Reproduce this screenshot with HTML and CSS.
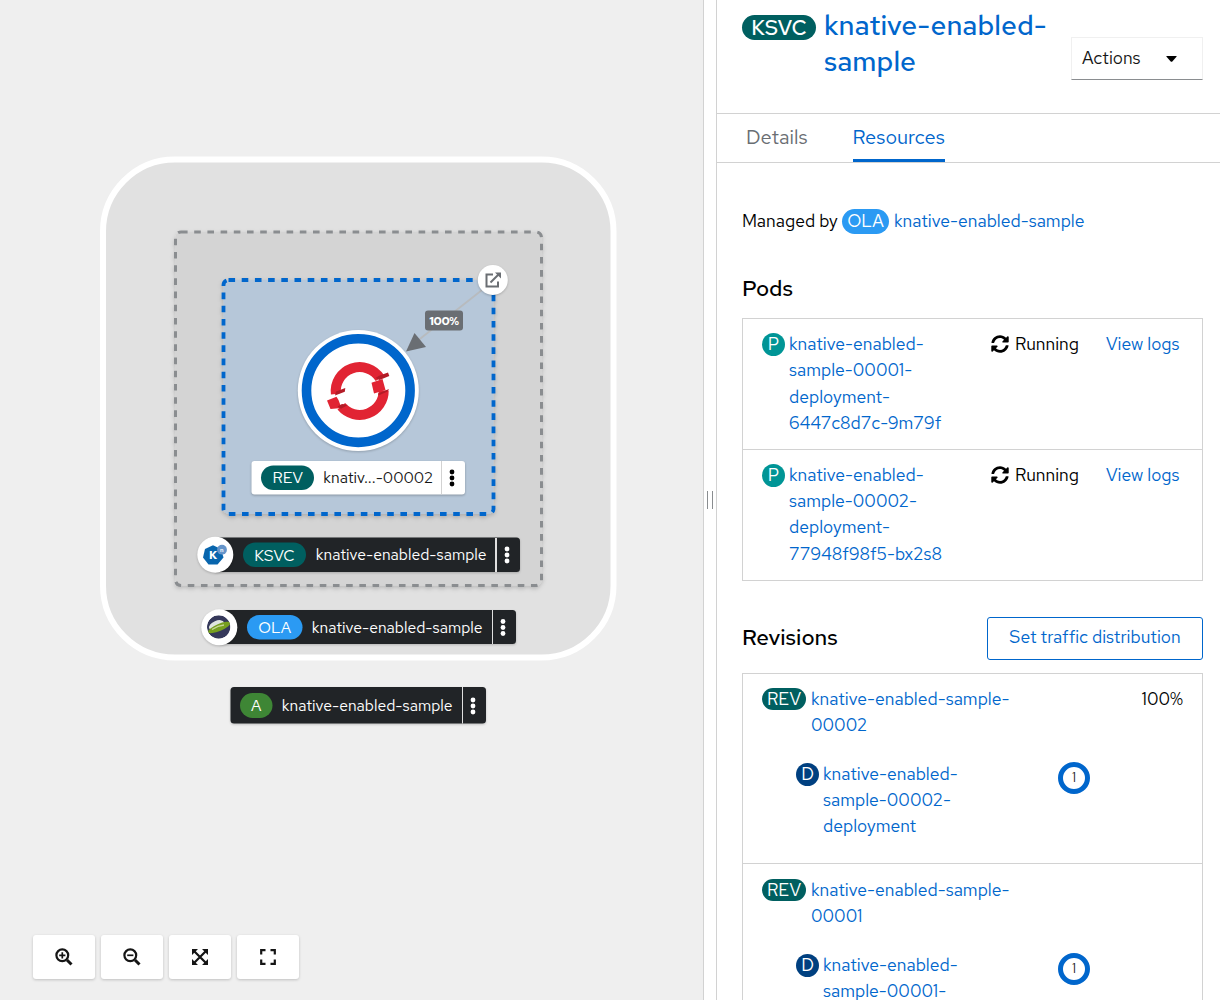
FILE: index.html
```html
<!DOCTYPE html>
<html lang="en">
<head>
<meta charset="utf-8">
<title>Topology</title>
<link rel="stylesheet" href="styles.css">
</head>
<body>
<div class="app">
<main class="topology">
<svg class="graph" width="703" height="1000" viewBox="0 0 703 1000">
  <defs>
    <filter id="shadow" x="-10%" y="-10%" width="120%" height="130%"><feDropShadow dx="0" dy="2" stdDeviation="2" flood-color="#030303" flood-opacity=".18"/></filter>
    <clipPath id="sphere"><circle cx="218.700" cy="627" r="11.700"/></clipPath>
    <g id="kebab"><circle cy="-6" r="2.400"/><circle r="2.400"/><circle cy="6" r="2.400"/></g>
  </defs>

  <rect class="application" x="103" y="159.500" width="510.500" height="498" rx="72"/>

  <g filter="url(#shadow)">
    <rect class="service" x="175.500" y="232" width="366" height="353.500" rx="5.500"/>
  </g>
  <g filter="url(#shadow)">
    <rect class="revision-area" x="223.500" y="280" width="270" height="234" rx="5"/>
  </g>

  <path class="edge" d="M482 290 416 342"/>
  <path class="arrow" d="M406 351.500 414.500 333 426 347z"/>
  <rect class="edge-tag" x="425" y="310.500" width="38" height="20" rx="3"/>
  <text class="edge-text" x="444" y="325" text-anchor="middle">100%</text>

  <circle class="disc" cx="492.800" cy="280" r="15"/>
  <g class="open-icon">
    <path d="M493 274.500h-6.500v12h11.500v-5"/>
    <path d="M490.500 282.500 499 274"/>
    <path class="open-head" d="M495 272.500h6v6z"/>
  </g>

  <circle class="disc" cx="358.300" cy="390.600" r="60.500"/>
  <circle class="pod-ring" cx="358.300" cy="390.600" r="51.800"/>
  <g class="openshift">
    <path class="logo-arc" d="M335.900 394A24 24 0 0 1 380 378.300"/>
    <path class="logo-arc" d="M383.700 390.500A24 24 0 0 1 341.300 406.300"/>
    <path class="logo-gap" d="M328 397.500 347 390.500 348.500 394.500 337 398.500 328 401zM369 384 390 375.500 390 378.500 382 381 369 385.500z"/>
    <path class="logo-main" d="M327 400.500 336.500 396.700 338.500 400 341.500 408 330.500 409zM371.500 382.700 382.500 379 385.500 390 374 393.500z"/>
    <path class="logo-dark" d="M379 375.800 388 372.600 389.300 376 379.500 380 375.500 378z M378 393.500 389 389 387.500 391.500 378.500 395.500zM336 391.500 345.300 388 344.800 391.800 335 395.500zM337.500 406.500 342 404 348 405 341 408.800z"/>
  </g>

  <rect class="node-label" x="251.500" y="461" width="213.500" height="33.500" rx="3"/>
  <path class="label-line" d="M441.500 461v33.500"/>
  <rect class="fill-teal" x="261" y="465.500" width="53" height="24.500" rx="12.250"/>
  <text class="node-text light" x="287.700" y="483.200" text-anchor="middle">REV</text>
  <text class="node-text" x="323.300" y="483.200">knativ...-00002</text>
  <use href="#kebab" x="452" y="478"/>

  <path class="dark-label" d="M215 537.500h301.500q3.500 0 3.500 3.500v27.500q0 3.500-3.500 3.500H215z"/>
  <path class="divider" d="M496 538v34"/>
  <circle class="disc" cx="215.300" cy="554.700" r="18"/>
  <path class="kn-blue" d="M213 545.300 221 549 223.500 557.500 217.500 564.500H208.500L203 557.500 205 549z"/>
  <circle class="kn-light" cx="222" cy="549.700" r="4.900"/>
  <text class="kn-k" x="209" y="559.300">K</text>
  <text class="kn-n" x="220" y="552">n</text>
  <rect class="fill-teal" x="243" y="542.500" width="63" height="24.500" rx="12.250"/>
  <text class="node-text light" x="274.500" y="560.700" text-anchor="middle">KSVC</text>
  <text class="node-text light" x="315.800" y="560.200">knative-enabled-sample</text>
  <use class="light" href="#kebab" x="507" y="555"/>

  <path class="dark-label" d="M219 610h293.500q3.500 0 3.500 3.500v27q0 3.500-3.500 3.500H219z"/>
  <path class="divider thin" d="M492.500 610v34"/>
  <circle class="disc" cx="219.300" cy="627.300" r="18"/>
  <g clip-path="url(#sphere)">
    <circle class="sphere" cx="218.700" cy="627" r="11.700"/>
    <ellipse class="orbit-white" cx="217.500" cy="624.500" rx="8" ry="4.500" transform="rotate(-23 219 627)"/>
    <ellipse class="orbit" cx="219" cy="627.500" rx="12" ry="3.500" transform="rotate(-23 219 627)"/>
    <path class="orbit-shine" d="M212 629.500q6-4 12-4.500"/>
  </g>
  <rect class="fill-blue" x="247" y="615" width="55.500" height="24.500" rx="12.250"/>
  <text class="node-text light" x="274.700" y="633.200" text-anchor="middle">OLA</text>
  <text class="node-text light" x="311.800" y="633.200">knative-enabled-sample</text>
  <use class="light" href="#kebab" x="503" y="627.500"/>

  <rect class="dark-label" x="230.500" y="687" width="255.500" height="36.500" rx="3.500"/>
  <path class="divider thin" d="M462.500 687v36.500"/>
  <rect class="fill-green" x="240" y="693" width="32.500" height="25" rx="12.500"/>
  <text class="node-text light" x="256.300" y="711.200" text-anchor="middle">A</text>
  <text class="node-text light" x="281.800" y="711.200">knative-enabled-sample</text>
  <use class="light" href="#kebab" x="473" y="706"/>
</svg>
<div class="controls">
  <button class="control" aria-label="Zoom in"><svg width="18" height="18" viewBox="0 0 18 18"><g class="stroke"><circle cx="7.300" cy="7.300" r="5.900"/><path class="fine" d="M7.300 4.200v6.200M4.200 7.300h6.200"/><path class="handle" d="M12 12l4.500 4.500"/></g></svg></button>
  <button class="control" aria-label="Zoom out"><svg width="18" height="18" viewBox="0 0 18 18"><g class="stroke"><circle cx="7.300" cy="7.300" r="5.900"/><path class="fine" d="M4.200 7.300h6.200"/><path class="handle" d="M12 12l4.500 4.500"/></g></svg></button>
  <button class="control" aria-label="Fit to screen"><svg width="18" height="18" viewBox="0 0 18 18"><path d="M1 1h6L1 7zM17 1v6l-6-6zM1 17v-6l6 6zM17 17h-6l6-6z"/><path class="stroke" d="M3 3l12 12M15 3 3 15"/></svg></button>
  <button class="control" aria-label="Reset view"><svg width="18" height="18" viewBox="0 0 18 18"><path class="stroke" d="M2.200 6.500V2.200h4.300M11.500 2.200h4.300v4.300M15.800 11.500v4.300h-4.300M6.500 15.800H2.200v-4.300"/></svg></button>
</div>
</main>
<div class="splitter"><span class="grip"></span></div>
<aside class="panel">
  <header class="head">
    <span class="badge ksvc">KSVC</span>
    <h1 class="title">knative-enabled-<br>sample</h1>
    <button class="actions"><span>Actions</span><svg width="11" height="6" viewBox="0 0 11 6"><path d="M.8 0h9.400q.8 0 .3.700L6.300 5.500q-.8.700-1.600 0L.5.700Q0 0 .8 0z"/></svg></button>
  </header>
  <nav class="tabs"><a class="tab details">Details</a><a class="tab active">Resources</a></nav>
  <p class="managed"><span class="by">Managed by</span><span class="badge ola">OLA</span><a class="link">knative-enabled-sample</a></p>
  <h2 class="heading pods-heading">Pods</h2>
  <ul class="box">
    <li class="pod"><span class="badge round pod-badge">P</span><a class="link pod-name">knative-enabled-<br>sample-00001-<br>deployment-<br>6447c8d7c-9m79f</a><span class="status"><svg width="18" height="18" viewBox="0 0 512 512"><path d="M370.700 133.300C339.500 104 298.900 88 255.800 88c-77.500.1-144.300 53.200-162.800 126.900-1.300 5.400-6.100 9.200-11.700 9.200H24.100c-7.500 0-13.200-6.800-11.800-14.200C33.900 94.900 134.800 8 256 8c66.400 0 126.800 26.100 171.300 68.700L463 41c15.100-15.100 41-4.400 41 17v134c0 13.300-10.700 24-24 24H346c-21.400 0-32.100-25.900-17-41l41.700-41.700zM32 296h134c21.400 0 32.100 25.900 17 41l-41.800 41.800c31.300 29.300 71.800 45.300 114.900 45.300 77.400-.1 144.300-53.100 162.800-126.800 1.300-5.400 6.100-9.200 11.700-9.200h57.300c7.500 0 13.200 6.800 11.800 14.200C478.100 417.100 377.200 504 256 504c-66.400 0-126.800-26.100-171.300-68.700L49 471c-15.100 15.100-41 4.400-41-17V320c0-13.300 10.700-24 24-24z"/></svg>Running</span><a class="link">View logs</a></li>
    <li class="pod"><span class="badge round pod-badge">P</span><a class="link pod-name">knative-enabled-<br>sample-00002-<br>deployment-<br>77948f98f5-bx2s8</a><span class="status"><svg width="18" height="18" viewBox="0 0 512 512"><path d="M370.700 133.300C339.500 104 298.900 88 255.800 88c-77.500.1-144.300 53.200-162.800 126.900-1.300 5.400-6.100 9.200-11.700 9.200H24.100c-7.500 0-13.200-6.800-11.800-14.200C33.900 94.900 134.800 8 256 8c66.400 0 126.800 26.100 171.300 68.700L463 41c15.100-15.100 41-4.400 41 17v134c0 13.300-10.700 24-24 24H346c-21.400 0-32.100-25.900-17-41l41.700-41.700zM32 296h134c21.400 0 32.100 25.900 17 41l-41.800 41.800c31.300 29.300 71.800 45.300 114.900 45.300 77.400-.1 144.300-53.100 162.800-126.800 1.300-5.400 6.100-9.200 11.700-9.200h57.300c7.500 0 13.200 6.800 11.800 14.200C478.100 417.100 377.200 504 256 504c-66.400 0-126.800-26.100-171.300-68.700L49 471c-15.100 15.100-41 4.400-41-17V320c0-13.300 10.700-24 24-24z"/></svg>Running</span><a class="link">View logs</a></li>
  </ul>
  <div class="rev-head"><h2 class="heading">Revisions</h2><button class="traffic">Set traffic distribution</button></div>
  <ul class="box">
    <li class="rev"><div class="rev-row"><span class="badge rev-badge">REV</span><a class="link">knative-enabled-sample-<br>00002</a><span class="percent">100%</span></div>
      <div class="dep-row"><span class="badge round dep-badge">D</span><a class="link dep-name">knative-enabled-<br>sample-00002-<br>deployment</a><span class="count">1</span></div></li>
    <li class="rev"><div class="rev-row"><span class="badge rev-badge">REV</span><a class="link">knative-enabled-sample-<br>00001</a></div>
      <div class="dep-row"><span class="badge round dep-badge">D</span><a class="link dep-name">knative-enabled-<br>sample-00001-</a><span class="count">1</span></div></li>
  </ul>
</aside>
</div>
</body>
</html>
```
FILE: styles.css
```css
* { box-sizing: border-box; }
body { margin: 0; height: 1000px; overflow: hidden; font: 17.500px/26.330px "Red Hat Text", Inter, "Liberation Sans", sans-serif; color: #151515; }
button { font: inherit; }
h1, h2, p, ul { margin: 0; padding: 0; font-weight: 500; }
ul { list-style: none; font-weight: 400; }
.app { display: grid; grid-template-columns: 703px 14px 1fr; height: 1000px; }
.topology { position: relative; background: #efefef; }
.graph { display: block; }
.application { fill: #e1e1e1; stroke: #fff; stroke-width: 6; }
.service { fill: #d4d4d4; stroke: #8a8d90; stroke-width: 3; stroke-dasharray: 6.600; }
.revision-area { fill: #b6c7d9; stroke: #06c; stroke-width: 3.800; stroke-dasharray: 6.600; }
.edge { stroke: #b8bbbe; stroke-width: 1.700; }
.arrow, .edge-tag { fill: #6a6e73; }
.edge-text { font-size: 12px; font-weight: 700; letter-spacing: -.4px; fill: #fff; }
.disc { fill: #fff; filter: drop-shadow(0 1px 1px #0003); }
.open-icon path { fill: none; stroke: #6a6e73; stroke-width: 2; }
.open-icon .open-head { fill: #6a6e73; stroke: none; }
.pod-ring { fill: none; stroke: #06c; stroke-width: 9.600; }
.logo-arc { fill: none; stroke: #e12433; stroke-width: 10; }
.logo-gap { fill: #fff; }
.logo-main { fill: #e12433; }
.logo-dark { fill: #b31c27; }
.node-label { fill: #fff; filter: drop-shadow(0 1px 1px #0004); }
.label-line { stroke: #d2d2d2; }
.node-text { font-size: 15.700px; fill: #151515; }
.light { fill: #fff; }
.fill-teal { fill: #005f60; }
.fill-blue { fill: #2b9af3; }
.fill-green { fill: #3e8635; }
.dark-label { fill: #212427; filter: drop-shadow(0 1px 1px #0003); }
.divider { stroke: #e0e0e0; stroke-width: 2; }
.thin { stroke-width: 1; }
.kn-blue { fill: #0865ad; }
.kn-light { fill: #6695ca; }
.kn-k { font-size: 11px; font-weight: 700; fill: #fff; }
.kn-n { font-size: 6px; font-weight: 600; fill: #fff; }
.sphere { fill: #35385a; }
.orbit-white { fill: #dfe5df; }
.orbit { fill: #779f20; }
.orbit-shine { fill: none; stroke: #c5d696; stroke-width: 1.500; }
.controls { position: absolute; left: 33px; top: 935px; display: flex; gap: 6px; }
.control { display: grid; place-items: center; width: 62px; height: 44px; padding: 0; border: 0; border-radius: 3px; background: #fff; box-shadow: 0 1px 3px #0003; }
.control svg { fill: #151515; }
.control .stroke { fill: none; stroke: #151515; stroke-width: 2.200; }
.control .fine { stroke-width: 1.700; }
.control .handle { stroke-width: 3; }
.splitter { display: grid; place-items: center; border: solid #d2d2d2; border-width: 0 1px; background: #fff; }
.grip { width: 6px; height: 18px; border: solid #8a8d90; border-width: 0 1px; }
.panel { overflow: hidden; background: #fff; color: #000; }
.badge { display: block; flex: none; height: 23px; border-radius: 13px; line-height: 23px; color: #fff; text-align: center; }
.link { color: #06c; }
.head { display: flex; height: 114px; padding: 8px 17px 0 25px; border-bottom: 1px solid #d2d2d2; }
.ksvc { width: 74px; height: 25px; margin: 7px 8px 0 0; line-height: 25px; font-size: 21px; font-weight: 500; background: #005f60; }
.title { width: 247px; margin-top: -1px; font-size: 28.100px; line-height: 36px; color: #06c; }
.actions { display: flex; align-items: center; justify-content: space-between; width: 132px; height: 43px; margin-top: 29px; padding: 0 25px 0 10px; border: 1px solid #f0f0f0; border-bottom-color: #8a8d90; background: #fff; color: #151515; }
.tabs { display: flex; gap: 45px; height: 49px; padding-left: 29px; border-bottom: 1px solid #d2d2d2; font-size: 20.050px; line-height: 47px; }
.tab { height: 48px; color: #6a6e73; }
.active { color: #06c; border-bottom: 3px solid #06c; }
.managed { display: flex; align-items: center; padding: 45px 0 0 25px; font-weight: 400; }
.by { width: 100px; white-space: nowrap; }
.ola { width: 47px; height: 25px; line-height: 24px; margin-right: 5px; background: #2b9af3; }
.heading { font-size: 22.400px; line-height: 30px; }
.pods-heading { padding: 38.670px 0 15px 25px; }
.box { margin: 0 17px 0 25px; border: 1px solid #d2d2d2; }
.pod { display: flex; height: 130px; padding: 12px 0 0 19px; }
.pod + .pod { height: 131px; border-top: 1px solid #d2d2d2; padding-top: 11.700px; }
.round { width: 23px; line-height: 22px; margin: 2px 4px 0 0; }
.pod-badge { background: #009596; }
.dep-badge { background: #004080; }
.pod-name { width: 202px; }
.status { display: flex; gap: 6px; width: 115px; height: 26px; align-items: center; }
.rev-head { display: flex; align-items: center; justify-content: space-between; height: 92px; padding: 23px 17px 0 25px; }
.rev-head .heading { padding-bottom: 2px; }
.traffic { width: 216px; height: 43px; border: 1px solid #06c; border-radius: 3px; background: #fff; color: #06c; padding: 0 0 2px; }
.rev { height: 189px; padding: 12px 19px 0; }
.rev + .rev { height: 192px; border-top: 1px solid #d2d2d2; padding-top: 13px; }
.rev-row { display: flex; line-height: 26px; }
.rev-badge { width: 44px; height: 22px; line-height: 22px; margin: 2px 5px 0 0; background: #005f60; }
.percent { margin-left: auto; }
.dep-row { display: flex; padding: 22.600px 0 0 34px; }
.dep-name { width: 235px; }
.count { width: 32px; height: 32px; margin-top: 1px; border: 5px solid #06c; border-radius: 50%; font-size: 13px; line-height: 22px; text-align: center; color: #151515; }
```
